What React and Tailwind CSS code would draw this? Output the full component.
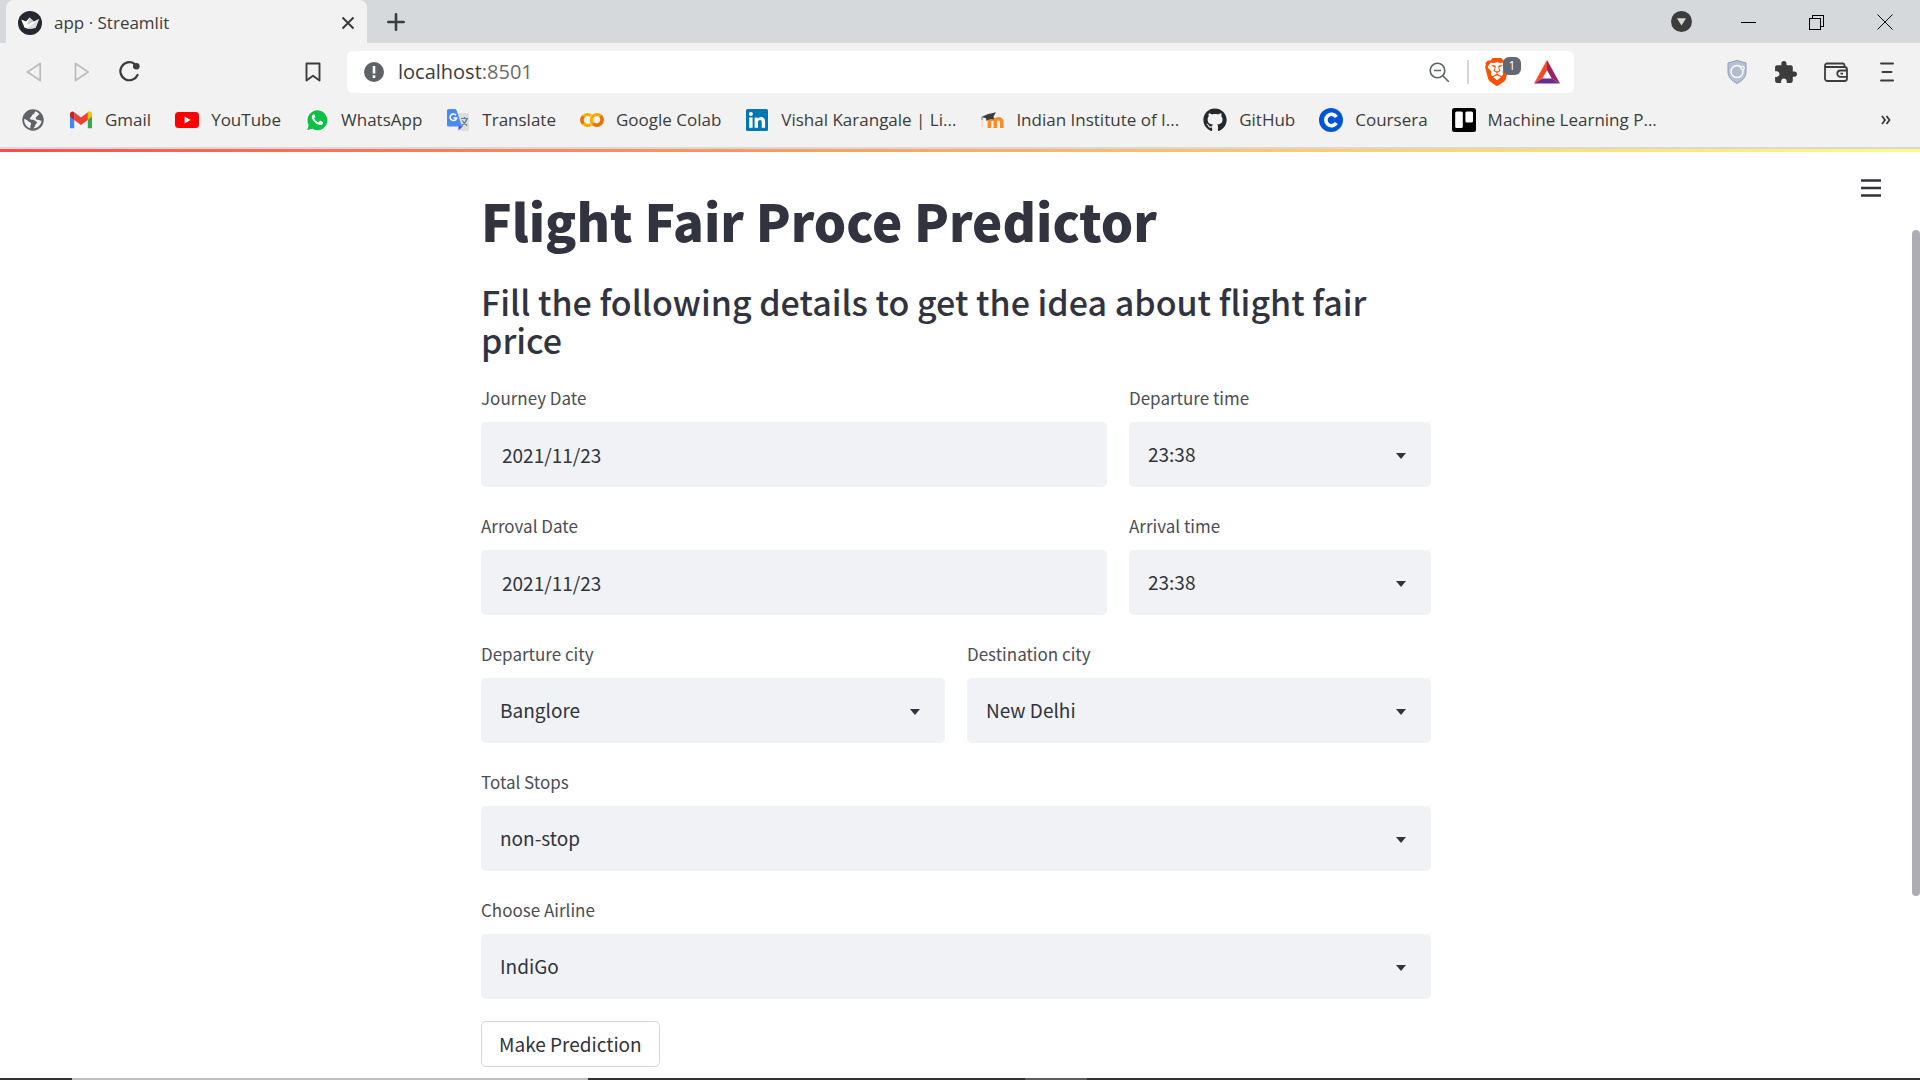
import { useState } from "react";
import { FaGithub } from "react-icons/fa";
import { SiBrave } from "react-icons/si";
import { MdExtension } from "react-icons/md";

const StreamlitIcon = () => (
  <svg viewBox="0 0 24 24" className="size-6 shrink-0">
    <circle cx="12" cy="12" r="12" fill="#262730" />
    <path d="M3.2 8.4 8 10.6 11.6 6.4 15.8 10.6 21 8 17.6 16.8Q12 18.6 6.6 16.8Z" fill="#fff" />
    <path d="M11.6 6.4 15.8 10.6 9 13.8Z" fill="#c9c9cc" />
    <path d="M21 8 17.6 16.8Q13 18 9 17.4Z" fill="#dcdcde" />
  </svg>
);

const GlobeIcon = () => (
  <svg viewBox="0 0 24 24" className="size-6 shrink-0">
    <circle cx="12" cy="12" r="10.7" fill="#5f6368" />
    <path d="M14.5 3.2c-1.4 1-.6 2.6-2.2 3-1.8.4-1.2 2.6-2.8 3.2-1 .4-.8 2 .4 2.2 1.6.2 3-.4 3.8 1 .6 1.2 2.4.6 2.2 2-.2 1.600-1.600 1.400-1.800 3-.1 1.200-1 2-1.800 3 4.600-.4 8-3.800 8.300-8-1.600.6-2.200-1-3.600-.8-1.400.2-2.400-.6-2.200-2 .2-1.200 1.600-1 2-2.200.2-.8 1.200-.8 1.600-1.400-1-1.400-2.400-2.400-3.900-3z" fill="#f2f2f2" />
    <path d="M3.300 11c1.800.4 3.200 1.200 4.200 2.400.8 1 2.400.6 2.600 2 .2 1.200-.8 1.600-.8 2.800v2.200C5.800 19.200 3.200 16 3.100 12z" fill="#f2f2f2" />
  </svg>
);

const GmailIcon = () => (
  <svg viewBox="0 0 24 24" className="size-6 shrink-0">
    <path d="M1 20.200h4.200V11L1 7.800z" fill="#4285f4" />
    <path d="M18.800 20.200H23V7.800L18.800 11z" fill="#34a853" />
    <path d="M18.800 6v6L23 8.600V6c0-2.300-2.600-3.500-4.200-2z" fill="#fbbc04" />
    <path d="M5.200 12V4.200L12 9.400l6.800-5.200V12L12 17z" fill="#ea4335" />
    <path d="M1 6v2.600L5.200 12V4.200C3.400 2.600 1 3.800 1 6z" fill="#c5221f" />
  </svg>
);

const YouTubeIcon = () => (
  <svg viewBox="0 0 24 24" className="size-6 shrink-0">
    <rect x="0" y="4" width="24" height="16" rx="3.500" fill="#f00" />
    <path d="M9.600 8.600v6.800l6-3.400z" fill="#fff" />
  </svg>
);

const WhatsAppIcon = () => (
  <svg viewBox="0 0 24 24" className="size-6 shrink-0">
    <path d="M.8 23.600 2.400 17.600A11.300 11.300 0 1 1 6.600 22z" fill="#fff" />
    <path d="M2.200 22.200 3.600 17A10 10 0 1 1 7.200 20.800z" fill="#0dc143" />
    <path d="M8.600 6.400c-.5 0-1.800.9-1.800 2.700 0 1.600 1.200 3.500 2.700 5 1.700 1.700 4.100 3 5.700 3 1.500 0 2.700-1 2.800-2.400.1-.6-.1-.8-.5-1l-2-.9c-.4-.2-.6-.1-.9.2l-.8 1c-.2.300-.5.300-.8.200-1.600-.7-2.900-1.900-3.700-3.400-.2-.3-.1-.5.100-.8l.8-.9c.1-.3.100-.5 0-.7l-.9-2c-.1-.2-.4-.3-.7 0z" fill="#fff" />
  </svg>
);

const TranslateIcon = () => (
  <svg viewBox="0 0 24 24" className="size-6 shrink-0">
    <path d="M8.500 5H21.500a1.500 1.500 0 0 1 1.500 1.500v15a1.500 1.500 0 0 1-1.500 1.500H14.500z" fill="#dcdcdc" />
    <path d="M15 10.500h7M18.500 9v1.500M21 10.500c-.8 3-2.600 5.300-5 6.800M16.300 12.600c1 2 2.800 3.800 4.800 4.800" stroke="#607988" strokeWidth="1.200" fill="none" />
    <path d="M12.500 17v5.500L17 18z" fill="#3b4fc4" />
    <path d="M2.500 1H9.500l1.200 1.500L16 18.500H2.500A1.500 1.500 0 0 1 1 17V2.500A1.500 1.500 0 0 1 2.500 1z" fill="#4a8af4" />
    <path d="M10 7.200A3.300 3.300 0 1 0 10.600 10H7.600" stroke="#fff" strokeWidth="1.500" fill="none" />
  </svg>
);

const ColabIcon = () => (
  <svg viewBox="0 0 24 24" className="size-6 shrink-0" fill="none" strokeWidth="3.400">
    <path d="M10.800 7.800A5.400 5.400 0 1 0 10.800 16.200" stroke="#f9ab00" />
    <path d="M3.200 8.600A5.400 5.400 0 0 0 3.200 15.400" stroke="#e8710a" />
    <circle cx="16.900" cy="12" r="5.400" stroke="#f9ab00" />
    <path d="M20.700 8.200A5.400 5.400 0 0 1 13.100 15.800" stroke="#e8710a" />
  </svg>
);

const LinkedInIcon = () => (
  <svg viewBox="0 0 24 24" className="size-6 shrink-0">
    <rect x="1" y="1" width="22" height="22" rx="1.500" fill="#0077b5" />
    <circle cx="5.900" cy="6" r="2" fill="#fff" />
    <path d="M4.200 9.400h3.400v10.400H4.200zM9.600 9.400h3.200v1.500c.6-1 1.700-1.800 3.300-1.800 3.200 0 4 2 4 4.900v5.800h-3.400v-5.200c0-1.400-.2-2.600-1.700-2.600s-2 1.200-2 2.600v5.200H9.600z" fill="#fff" />
  </svg>
);

const MoodleIcon = () => (
  <svg viewBox="0 0 24 24" className="size-6 shrink-0">
    <path d="M9.400 20v-6a3 3 0 0 1 6 0v6M15.400 20v-6a3.200 3.200 0 0 1 6.400 0v6" stroke="#f98c2b" strokeWidth="3.600" fill="none" />
    <path d="M2.200 11v8" stroke="#f6cdb4" strokeWidth="1.200" />
    <path d="M1.500 9 7.500 6.200 16 4.200 13.500 8.600 14 11.500Q10 10.200 6.500 13L6 10.200z" fill="#3c3c3c" />
    <path d="M2 9v3" stroke="#777" strokeWidth="1" />
  </svg>
);

const CourseraIcon = () => (
  <svg viewBox="0 0 24 24" className="size-6 shrink-0">
    <circle cx="12" cy="12" r="12" fill="#0056d2" />
    <path d="M17.400 9A5.700 5.700 0 1 0 17.400 15" stroke="#fff" strokeWidth="3.600" fill="none" />
  </svg>
);

const TrelloIcon = () => (
  <svg viewBox="0 0 24 24" className="size-6 shrink-0">
    <rect width="24" height="24" rx="2.500" fill="#000" />
    <rect x="3.200" y="3.400" width="7.600" height="16.600" rx="1.500" fill="#fff" />
    <rect x="13.400" y="3.400" width="7.600" height="11" rx="1.500" fill="#fff" />
  </svg>
);

const GitHubIcon = () => <FaGithub className="size-6 shrink-0 text-[#24292e]" />;

const bookmarks = [
  { Icon: GmailIcon, label: "Gmail" },
  { Icon: YouTubeIcon, label: "YouTube" },
  { Icon: WhatsAppIcon, label: "WhatsApp" },
  { Icon: TranslateIcon, label: "Translate" },
  { Icon: ColabIcon, label: "Google Colab" },
  { Icon: LinkedInIcon, label: "Vishal Karangale | Li..." },
  { Icon: MoodleIcon, label: "Indian Institute of I..." },
  { Icon: GitHubIcon, label: "GitHub" },
  { Icon: CourseraIcon, label: "Coursera" },
  { Icon: TrelloIcon, label: "Machine Learning P..." },
];

function TabStrip() {
  return (
    <div className="flex h-[43px] items-stretch bg-[#d5d9dc] pl-[6px] text-[#3c3c3c]">
      <div className="flex w-[361px] items-center rounded-t-lg bg-[#f2f2f2] pt-[2px] pr-[11px] pl-3">
        <StreamlitIcon />
        <span className="ml-3 flex-1 text-[17px] font-medium">app · Streamlit</span>
        <button aria-label="Close tab" className="p-px">
          <svg viewBox="0 0 14 14" className="size-[14px]" stroke="#3c3c3c" strokeWidth="2"><path d="M1.500 1.500l11 11M12.500 1.500l-11 11" /></svg>
        </button>
      </div>
      <button aria-label="New tab" className="ml-5 self-center">
        <svg viewBox="0 0 18 18" className="size-[18px]" stroke="#3c3c3c" strokeWidth="2.600" strokeLinecap="round"><path d="M9 1.300v15.400M1.300 9h15.400" /></svg>
      </button>
      <div className="ml-auto flex items-center gap-[49px] pr-[27px]">
        <button aria-label="Search tabs">
          <svg viewBox="0 0 21 21" className="size-[21px]"><circle cx="10.500" cy="10.500" r="10.500" fill="#3c3c3c" /><path d="M6 7.200h9L10.500 14.500z" fill="#d5d9dc" /></svg>
        </button>
        <button aria-label="Minimize"><svg viewBox="0 0 16 16" className="size-4" shapeRendering="crispEdges"><path d="M0 8h15v1H0z" fill="#000" /></svg></button>
        <button aria-label="Restore" className="ml-[3px]">
          <svg viewBox="0 0 16 16" className="size-4" fill="none" stroke="#000" shapeRendering="crispEdges"><path d="M.5 4.500h11v11H.5zM3.500 4V1.500h11v11H12" /></svg>
        </button>
        <button aria-label="Close" className="ml-[3px]">
          <svg viewBox="0 0 16 16" className="size-4" stroke="#000"><path d="M.5.5l15 15M15.500.5l-15 15" /></svg>
        </button>
      </div>
    </div>
  );
}

function Toolbar() {
  return (
    <div className="flex h-[58px] items-center text-[#3c3c3c]">
      <div className="flex items-center pl-[26px]">
        <button aria-label="Back"><svg viewBox="0 0 16 20" className="h-5 w-4" fill="none" stroke="#bdbdbd" strokeWidth="1.800" strokeLinejoin="round"><path d="M14.200 1.500v17L1.500 10z" /></svg></button>
        <button aria-label="Forward" className="ml-8"><svg viewBox="0 0 16 20" className="h-5 w-4" fill="none" stroke="#bdbdbd" strokeWidth="1.800" strokeLinejoin="round"><path d="M1.500 1.500v17L14.200 10z" /></svg></button>
        <button aria-label="Reload" className="ml-[29px]">
          <svg viewBox="0 0 22 22" className="size-[22px]" fill="none" stroke="#3c3c3c" strokeWidth="2.200" strokeLinecap="round"><path d="M15.500 2.800A9 9 0 1 0 18.600 14" /><circle cx="17.300" cy="5.300" r="3.300" fill="#3c3c3c" stroke="none" /></svg>
        </button>
        <button aria-label="Bookmark this page" className="ml-[164px]">
          <svg viewBox="0 0 16 20" className="h-5 w-4" fill="none" stroke="#3c3c3c" strokeWidth="1.900" strokeLinejoin="round"><path d="M1.500 1.500h13v17l-6.500-4.800-6.500 4.800z" /></svg>
        </button>
      </div>
      <div className="ml-[26px] flex h-[42px] flex-1 items-center rounded-md bg-white pr-[14px] pl-[17px]">
        <svg viewBox="0 0 20 20" className="size-5 shrink-0"><circle cx="10" cy="10" r="10" fill="#5f6368" /><path d="M8.700 4h2.600v7.500H8.700zM8.700 13.300h2.600v2.600H8.700z" fill="#fff" /></svg>
        <div className="ml-[14px] flex-1 text-[20px] text-[#3c3c3c]">localhost<span className="text-[#6b6b6b]">:8501</span></div>
        <button aria-label="Zoom">
          <svg viewBox="0 0 21 21" className="size-[21px]" fill="none" stroke="#5f6368" strokeWidth="1.600"><circle cx="8.500" cy="8.500" r="7.300" /><path d="M13.800 13.800l6 6M5 8.500h7" /></svg>
        </button>
        <span className="mr-[14px] ml-[17px] h-6 w-[2px] bg-[#d5d5d8]" />
        <button aria-label="Brave Shields" className="relative mr-[13px] w-[38px]">
          <SiBrave className="size-7 text-[#ff5000]" />
          <span className="absolute -top-px left-5 flex size-[18px] items-center justify-center rounded-md bg-[#636675] text-[12px] text-white">1</span>
        </button>
        <button aria-label="Brave Rewards">
          <svg viewBox="0 0 26 24" className="h-6 w-[26px]"><path d="M13 0 0 23.500 8.400 18.500 13 10z" fill="#ff4724" /><path d="M13 0v10l4.800 8.500 8.200 5z" fill="#9e1f63" /><path d="M0 23.500h26l-8.200-5H8.400z" fill="#662d91" /></svg>
        </button>
      </div>
      <div className="ml-[153px] flex items-center pr-[26px]">
        <button aria-label="Privacy extension">
          <svg viewBox="0 0 20 24" className="h-6 w-5"><path d="M10 .5 19 3v9c0 5-4 9-9 11.500C5 21 1 17 1 12V3z" fill="#b7c1d6" stroke="#8e9bb8" /><circle cx="10" cy="11.500" r="6" fill="#b4bccb" stroke="#fff" strokeWidth="1.400" /><circle cx="15.500" cy="8" r="1.800" fill="#c8d0e0" stroke="#fff" /></svg>
        </button>
        <button aria-label="Extensions" className="ml-[26px]"><MdExtension className="size-[25px]" /></button>
        <button aria-label="Wallet" className="ml-[26px]">
          <svg viewBox="0 0 24 20" className="h-5 w-6" fill="none" stroke="#3c3c3c" strokeWidth="1.800" strokeLinejoin="round"><path d="M1 4v12.500A2.500 2.500 0 0 0 3.500 19h17a2.500 2.500 0 0 0 2.500-2.500V7.500A2.500 2.500 0 0 0 20.500 5H2.500A1.500 1.500 0 0 1 1 3.500v0A2 2 0 0 1 3 1.500h15.500A2 2 0 0 1 20.500 3.500V5" /><path d="M23 8.500h-6.500a3.200 3.200 0 0 0 0 6.400H23M16.500 11.700H19" /></svg>
        </button>
        <button aria-label="Browser menu" className="ml-8"><svg viewBox="0 0 14 20" className="h-5 w-[14px]" stroke="#3c3c3c" strokeWidth="2" strokeLinecap="round"><path d="M1 1.500h12M2.500 10h9M1 18.500h12" /></svg></button>
      </div>
    </div>
  );
}

function BookmarksBar() {
  return (
    <nav className="flex h-[46px] items-center pb-[8px] pl-[21px] pr-[29px] text-[17px] whitespace-nowrap text-[#3c3c3c]">
      <a href="#globe" aria-label="Web page" className="mr-6"><GlobeIcon /></a>
      <div className="flex items-center gap-6">
        {bookmarks.map(({ Icon, label }) => (
          <a key={label} href="#bookmark" className="flex items-center gap-3">
            <Icon />
            {label}
          </a>
        ))}
      </div>
      <button aria-label="More bookmarks" className="ml-auto">
        <svg viewBox="0 0 10 10" className="size-[10px]" fill="none" stroke="#3c3c3c" strokeWidth="1.800"><path d="M1 1l3 4-3 4M5.500 1l3 4-3 4" /></svg>
      </button>
    </nav>
  );
}

function Field({ id, label, span, children }) {
  return (
    <div className={span}>
      <label htmlFor={id} className="mb-3 block text-[17px] leading-6 text-[#4b4d57]">{label}</label>
      {children}
    </div>
  );
}

function DateField({ id, label, span }) {
  const [value, setValue] = useState("2021/11/23");
  return (
    <Field id={id} label={label} span={span}>
      <input id={id} type="text" value={value} onChange={(e) => setValue(e.target.value)} className="block h-[65px] w-full rounded-[5px] bg-[#f0f2f6] px-[21px] text-[19px] text-[#31333f]" />
    </Field>
  );
}

function SelectField({ id, label, span, option }) {
  return (
    <Field id={id} label={label} span={span}>
      <div className="relative">
        <select id={id} className="block h-[65px] w-full appearance-none rounded-[5px] bg-[#f0f2f6] px-[19px] text-[19px] text-[#31333f]">
          <option>{option}</option>
        </select>
        <svg viewBox="0 0 10 6" className="pointer-events-none absolute top-[31px] right-[25px] h-[6px] w-[10px]"><path d="M0 0h10L5 6z" fill="#31333f" /></svg>
      </div>
    </Field>
  );
}

export default function App() {
  return (
    <div className="flex h-screen flex-col overflow-hidden bg-white font-['Open_Sans','Noto_Sans',sans-serif]">
      <header className="shrink-0 border-b-2 border-[#d5d9dc] bg-[#f2f2f2]">
        <TabStrip />
        <Toolbar />
        <BookmarksBar />
      </header>
      <div className="h-[3px] shrink-0 bg-linear-to-r from-[#ff4b4b] to-[#fffd80]" />
      <main className="relative flex min-h-0 flex-1 overflow-hidden font-['Noto_Sans_CJK_SC',sans-serif] text-[#31333f]">
        <div className="min-w-0 flex-1">
          <div className="mx-auto max-w-[950px] pt-[33px]">
            <h1 className="text-[51px] leading-[70px] font-black">Flight Fair Proce Predictor</h1>
            <h2 className="mt-7 text-[34px] leading-[38px] font-medium">Fill the following details to get the idea about flight fair price</h2>
            <form onSubmit={(e) => e.preventDefault()} className="mt-[27px]">
              <div className="grid grid-cols-6 gap-x-[22px] gap-y-[27px]">
                <DateField id="journey-date" label="Journey Date" span="col-span-4" />
                <SelectField id="departure-time" label="Departure time" span="col-span-2" option="23:38" />
                <DateField id="arrival-date" label="Arroval Date" span="col-span-4" />
                <SelectField id="arrival-time" label="Arrival time" span="col-span-2" option="23:38" />
                <SelectField id="departure-city" label="Departure city" span="col-span-3" option="Banglore" />
                <SelectField id="destination-city" label="Destination city" span="col-span-3" option="New Delhi" />
                <SelectField id="stops" label="Total Stops" span="col-span-6" option="non-stop" />
                <SelectField id="airline" label="Choose Airline" span="col-span-6" option="IndiGo" />
              </div>
              <button type="submit" className="mt-[22px] h-[46px] rounded-[5px] border border-[#d6d6d8] px-[17px] text-[19px]">Make Prediction</button>
            </form>
          </div>
        </div>
        <button aria-label="App menu" className="absolute top-[27px] right-[39px]">
          <svg viewBox="0 0 20 18" className="h-[18px] w-5" stroke="#31333f" strokeWidth="2.500"><path d="M0 1.500h20M0 9h20M0 16.500h20" /></svg>
        </button>
        <div className="w-2 pt-[78px]">
          <div className="h-[666px] rounded-full bg-[#adadb2]" />
        </div>
      </main>
      <footer className="flex h-[2px] shrink-0 bg-[#323232]">
        <div className="ml-[72px] w-[516px] bg-[#c0c0c0]" />
        <div className="ml-[437px] w-[62px] bg-[#5c5c5c]" />
      </footer>
    </div>
  );
}
